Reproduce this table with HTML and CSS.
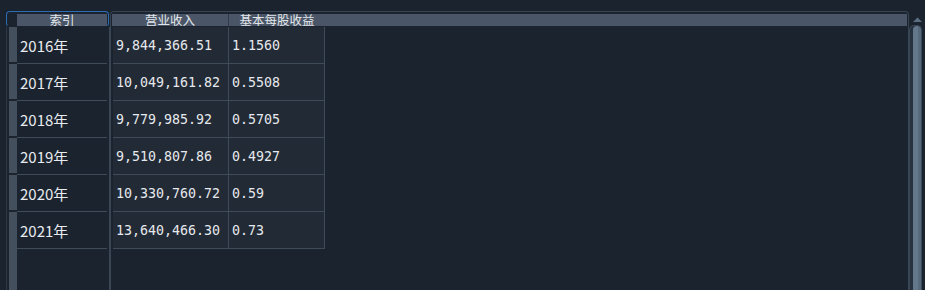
FILE: index.html
```html
<!DOCTYPE html>
<html lang="zh">
<head>
<meta charset="utf-8">
<link rel="stylesheet" href="styles.css">
</head>
<body>
<div class="grid">
  <div class="left">
    <div class="lhead"><div class="hbar">索引</div></div>
    <div class="lbody">
      <div class="lrow"><span class="handle"></span><span class="lcell">2016年</span></div>
      <div class="lrow"><span class="handle"></span><span class="lcell">2017年</span></div>
      <div class="lrow"><span class="handle"></span><span class="lcell">2018年</span></div>
      <div class="lrow"><span class="handle"></span><span class="lcell">2019年</span></div>
      <div class="lrow"><span class="handle"></span><span class="lcell">2020年</span></div>
      <div class="lrow last"><span class="handle"></span><span class="lcell">2021年</span></div>
      <div class="lfill"><span class="handle"></span></div>
    </div>
  </div>
  <div class="right">
    <div class="rhead">
      <div class="hcell c1">营业收入</div>
      <div class="hcell c2">基本每股收益</div>
    </div>
    <div class="rbody">
      <div class="rrow"><span class="cell c1">9,844,366.51</span><span class="cell c2">1.1560</span></div>
      <div class="rrow"><span class="cell c1">10,049,161.82</span><span class="cell c2">0.5508</span></div>
      <div class="rrow"><span class="cell c1">9,779,985.92</span><span class="cell c2">0.5705</span></div>
      <div class="rrow"><span class="cell c1">9,510,807.86</span><span class="cell c2">0.4927</span></div>
      <div class="rrow"><span class="cell c1">10,330,760.72</span><span class="cell c2">0.59</span></div>
      <div class="rrow"><span class="cell c1">13,640,466.30</span><span class="cell c2">0.73</span></div>
    </div>
  </div>
  <div class="scroll">
    <svg class="arrow" width="13" height="14" viewBox="0 0 13 14"><polygon points="4,11 8.5,6.6 13,11" fill="#5b6f82"/></svg>
    <div class="track"><div class="thumb"></div></div>
  </div>
</div>
</body>
</html>
```

FILE: styles.css
```css
html, body {
  margin: 0;
  padding: 0;
  background: #1b232e;
  overflow: hidden;
}
.grid {
  display: flex;
  height: 290px;
  box-sizing: border-box;
  padding: 11px 0 0 6px;
}
.left {
  width: 104px;
  display: flex;
  flex-direction: column;
}
.lhead {
  width: 103px;
  height: 16px;
  box-sizing: border-box;
  border: 1px solid #2c6cb2;
  border-bottom-color: transparent;
  border-radius: 4px;
  padding: 2px 1px 0 10px;
}
.hbar, .hcell {
  height: 12px;
  line-height: 12px;
  overflow: hidden;
  background: #4a5667;
  color: #e2e6eb;
  font-family: "Noto Sans CJK SC", sans-serif;
  font-size: 12.5px;
  text-align: center;
}
.lbody {
  flex: 1;
  display: flex;
  flex-direction: column;
  border-left: 1px solid #2e3946;
  border-right: 1px solid #3b4757;
  padding-left: 2px;
}
.lrow {
  display: flex;
  height: 37px;
}
.handle {
  width: 8px;
  height: 35px;
  background: #444f5e;
  flex: none;
}
.lrow.last .handle {
  height: 37px;
}
.lcell {
  width: 90px;
  border-bottom: 1px solid #404b5a;
  padding-left: 3px;
  box-sizing: border-box;
  height: 37px;
  line-height: 37px;
  color: #e8ebef;
  font-family: "Noto Sans CJK SC", sans-serif;
  font-size: 15px;
}
.lfill {
  flex: 1;
  display: flex;
}
.lfill .handle {
  height: auto;
}
.right {
  width: 799px;
  box-sizing: border-box;
  border: 1px solid #374453;
  border-bottom: none;
  border-radius: 4px 4px 0 0;
  display: flex;
  flex-direction: column;
}
.rhead {
  display: flex;
  margin: 2px 1px 0 1px;
  background: #4a5667;
}
.hcell.c1 {
  width: 117px;
  border-right: 1px solid #313c4a;
  box-sizing: border-box;
}
.hcell.c2 {
  width: 96px;
}
.rbody {
  margin-top: 1px;
  padding-left: 2px;
  display: flex;
  flex-direction: column;
}
.rrow {
  display: flex;
}
.cell {
  height: 37px;
  box-sizing: border-box;
  border-right: 1px solid #404b5a;
  border-bottom: 1px solid #404b5a;
  background: #222a35;
  padding-left: 3px;
  line-height: 37px;
  color: #e6e9ed;
  font-family: "DejaVu Sans Mono", monospace;
  font-size: 13.3px;
  white-space: nowrap;
}
.cell.c1 { width: 116px; }
.cell.c2 { width: 96px; }
.scroll {
  width: 13px;
  display: flex;
  flex-direction: column;
}
.arrow {
  display: block;
  flex: none;
}
.track {
  flex: 1;
  box-sizing: border-box;
  border: 1px solid #394757;
  border-bottom: none;
  border-radius: 5px 5px 0 0;
  background: #27323e;
  padding: 0 0 0 3px;
  display: flex;
}
.thumb {
  width: 8px;
  border-radius: 4px 4px 0 0;
  background: linear-gradient(to right, #63788b 0, #63788b 5px, #566a7c 5px, #566a7c 8px);
}
```
